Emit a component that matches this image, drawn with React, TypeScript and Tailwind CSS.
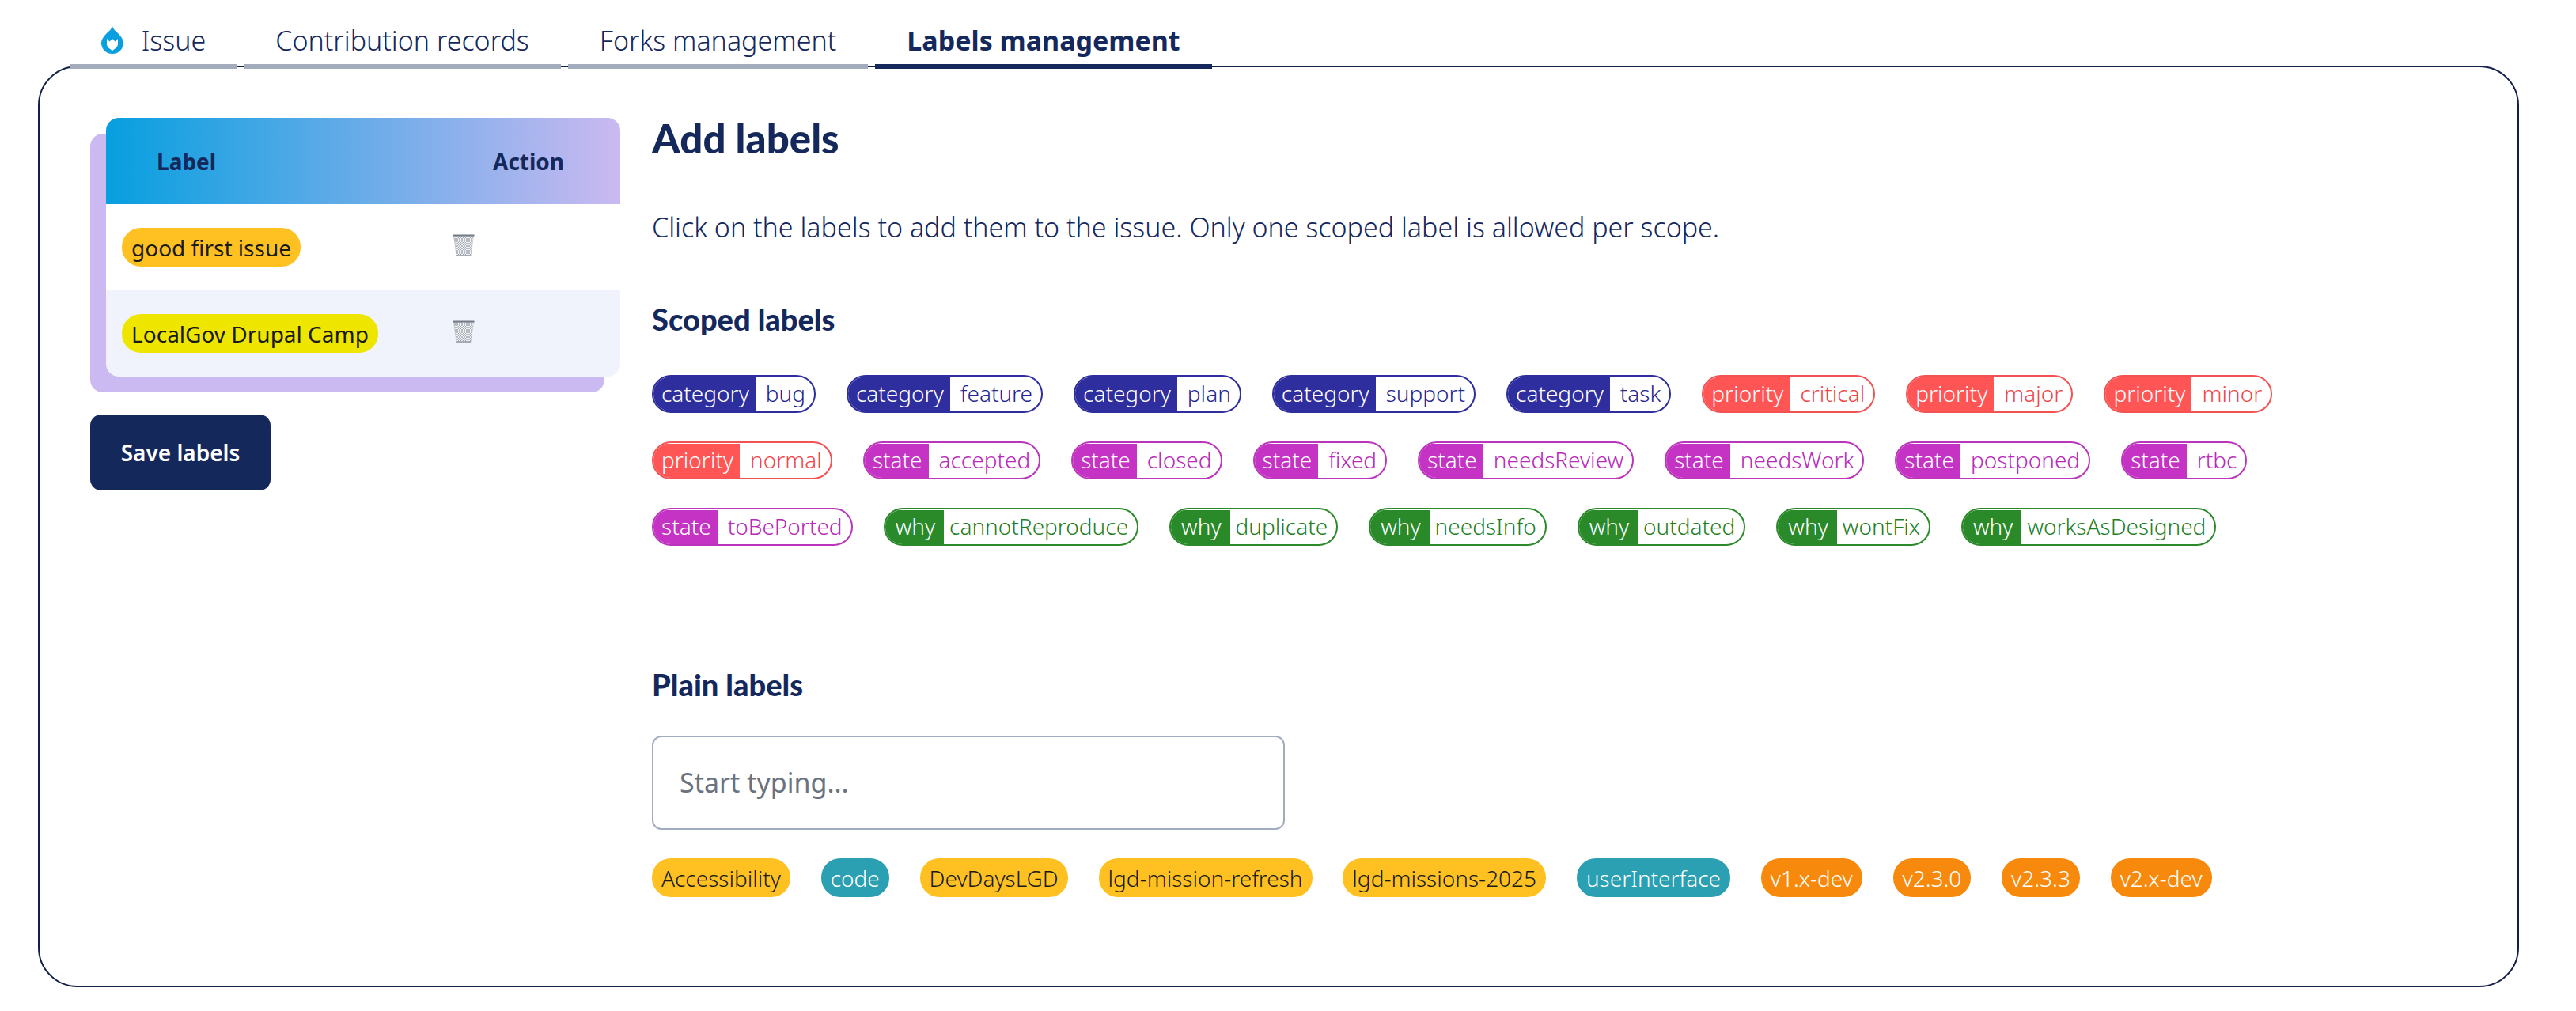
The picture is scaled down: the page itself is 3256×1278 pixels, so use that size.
import React from "react";

const body = "font-['Noto_Sans',sans-serif]";

type Tone = { fill: string; line: string; text: string; sp: string; vp: string };

function Scoped({ scope, value, fill, line, text, sp, vp }: { scope: string; value: string } & Tone) {
  return (
    <span className={`inline-flex h-[48px] items-stretch overflow-hidden rounded-[24px] border-2 bg-white pt-[1px] text-[28px] leading-[41px] font-light ${line} ${text}`}>
      <span className={`text-white ${sp} ${fill}`}>{scope}</span>
      <span className={vp}>{value}</span>
    </span>
  );
}

function Plain({ name, cls }: { name: string; cls: string }) {
  return <span className={`inline-flex h-[49px] items-center rounded-[24px] px-[12px] text-[28px] leading-none ${cls}`}>{name}</span>;
}

const sp = "pl-[10px] pr-[8px]";
const vp = "pl-[13px] pr-[11px]";
const blue: Tone = { fill: "bg-[#2e2e9e]", line: "border-[#2e2e9e]", text: "text-[#26268f]", sp, vp };
const red: Tone = { fill: "bg-[#ff5555]", line: "border-[#f25252]", text: "text-[#f04848]", sp, vp };
const purple: Tone = { fill: "bg-[#c433c4]", line: "border-[#bb35bb]", text: "text-[#b82ab8]", sp, vp };
const green: Tone = { fill: "bg-[#2a8a2a]", line: "border-[#2a8a2a]", text: "text-[#1f7f1f]", sp: "pl-[13px] pr-[11px]", vp: "pl-[7px] pr-[11px]" };

const scoped: [string, string, Tone][] = [
  ["category", "bug", blue], ["category", "feature", blue], ["category", "plan", blue], ["category", "support", blue], ["category", "task", blue],
  ["priority", "critical", red], ["priority", "major", red], ["priority", "minor", red], ["priority", "normal", red],
  ["state", "accepted", purple], ["state", "closed", purple], ["state", "fixed", purple], ["state", "needsReview", purple], ["state", "needsWork", purple], ["state", "postponed", purple], ["state", "rtbc", purple], ["state", "toBePorted", purple],
  ["why", "cannotReproduce", green], ["why", "duplicate", green], ["why", "needsInfo", green], ["why", "outdated", green], ["why", "wontFix", green], ["why", "worksAsDesigned", green],
];

const yellow = "bg-[#ffc122] text-[#1a1a1a] font-light";
const teal = "bg-[#2aa0b2] text-white font-light";
const orange = "bg-[#f78a0c] text-white font-light";
const plain: [string, string][] = [
  ["Accessibility", yellow], ["code", teal], ["DevDaysLGD", yellow], ["lgd-mission-refresh", yellow], ["lgd-missions-2025", yellow], ["userInterface", teal], ["v1.x-dev", orange], ["v2.3.0", orange], ["v2.3.3", orange], ["v2.x-dev", orange],
];

function Tab({ label, active, w, icon }: { label: string; active?: boolean; w: string; icon?: boolean }) {
  return (
    <div className={`flex h-[63px] items-center justify-center gap-[23px] border-b-[6px] pb-[3px] text-[34px] text-[#14285c] ${w} ${active ? "border-[#14285c] font-bold" : "border-[#a2acbd] font-light"}`}>
      {icon && (
        <svg viewBox="0 0 28 35" className="-mt-[2px] h-[35px] w-[28px] shrink-0">
          <path fill="#0a9fe0" d="M14 0c1 4 5 7 8 10 4 4 6 8 6 11 0 8-6 14-14 14S0 29 0 21c0-3 2-7 6-11 3-3 7-6 8-10z" />
          <path fill="#fff" d="M7 16l3.5 3.5L14 16l3.5 3.5L21 16v7c0 3-4 6-7 8-3-2-7-5-7-8z" />
        </svg>
      )}
      {label}
    </div>
  );
}

function Trash() {
  return (
    <svg viewBox="0 0 28 28" className="-mt-[5px] h-[28px] w-[28px] shrink-0">
      <defs>
        <pattern id="mesh" width="3" height="3" patternUnits="userSpaceOnUse">
          <rect width="3" height="3" fill="#f0f1f3" />
          <path d="M0 0L3 3M3 0L0 3" stroke="#8f96a1" strokeWidth="0.6" />
        </pattern>
      </defs>
      <path fill="url(#mesh)" stroke="#aab0b9" strokeWidth="0.5" d="M1.5 2h25L23 27.5H5z" />
      <rect x="0.5" y="0.5" width="27" height="2" fill="#727b86" />
      <rect x="5" y="26" width="18" height="2" fill="#a4abb5" />
    </svg>
  );
}

export default function App() {
  return (
    <div className={`min-h-[1278px] bg-white pt-[24px] pb-[30px] pl-[48px] pr-[72px] ${body} text-[#14285c]`}>
      <div className="relative z-10 -mb-[4px] flex pl-[40px]">
        <Tab label="Issue" w="w-[212px]" icon />
        <Tab label="Contribution records" w="ml-[8px] w-[401px]" />
        <Tab label="Forks management" w="ml-[9px] w-[379px]" />
        <Tab label="Labels management" w="ml-[9px] w-[426px]" active />
      </div>
      <div className="flex h-[1165px] gap-[60px] rounded-[50px] border-2 border-[#122048] pt-[60px] pl-[64px] pr-[64px]">
        <div className="w-[650px] shrink-0 pt-[24px]">
          <div className="rounded-[16px] bg-[#cbb9f1] pb-[20px]">
            <div className="relative -top-[20px] left-[20px] -mb-[20px] overflow-hidden rounded-[16px]">
              <div className="flex h-[109px] items-center bg-linear-to-r/srgb from-[#069fe0] to-[#cbb9f1] text-[28px] font-bold">
                <span className="w-[64px]" />
                <span className="w-[425px]">Label</span>
                <span>Action</span>
              </div>
              <div className="flex h-[109px] items-center bg-white">
                <div className="w-[438px] shrink-0 pl-[20px]">
                  <Plain name="good first issue" cls="bg-[#ffc122] text-[#1a1a1a] w-[226px] justify-center" />
                </div>
                <Trash />
              </div>
              <div className="flex h-[109px] items-center bg-[#f0f3fb]">
                <div className="w-[438px] shrink-0 pl-[20px]">
                  <Plain name="LocalGov Drupal Camp" cls="bg-[#efe600] text-[#1a1a1a] w-[324px] justify-center" />
                </div>
                <Trash />
              </div>
            </div>
          </div>
          <button className="mt-[28px] block h-[96px] w-[228px] rounded-[14px] bg-[#14285c] text-[28px] font-semibold text-white">Save labels</button>
        </div>
        <div className="min-w-0 flex-1">
          <h1 className="pt-[2px] font-['Lato',sans-serif] text-[51px] leading-[56px] font-black">Add labels</h1>
          <p className="mt-[60px] text-[34px] leading-[48px] font-light">Click on the labels to add them to the issue. Only one scoped label is allowed per scope.</p>
          <h2 className="mt-[70px] font-['Lato',sans-serif] text-[38px] leading-[44px] font-black">Scoped labels</h2>
          <div className="mt-[49px] flex flex-wrap gap-x-[39px] gap-y-[36px]">
            {scoped.map(([s, v, c]) => (
              <Scoped key={v} scope={s} value={v} {...c} />
            ))}
          </div>
          <h2 className="mt-[153px] font-['Lato',sans-serif] text-[38px] leading-[44px] font-black">Plain labels</h2>
          <div className="mt-[43px] flex h-[119px] w-[800px] items-center rounded-[12px] border-2 border-[#a2acbd] px-[33px] text-[34px] text-[#6b7280]">Start typing...</div>
          <div className="mt-[36px] flex flex-wrap gap-x-[38.8px]">
            {plain.map(([n, c]) => (
              <Plain key={n} name={n} cls={c} />
            ))}
          </div>
        </div>
      </div>
    </div>
  );
}
